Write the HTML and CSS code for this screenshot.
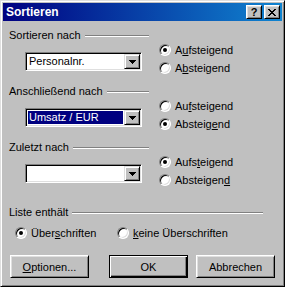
FILE: index.html
```html
<!DOCTYPE html>
<html lang="de">
<head>
    <meta charset="UTF-8">
    <title>Sortieren</title>
    <link rel="stylesheet" href="styles.css">
</head>
<body>
    <div class="window">
        <div class="titlebar">
            <span class="title">Sortieren</span>
            <div class="caption-buttons">
                <span class="cap-btn help">?</span>
                <span class="cap-btn">
                    <svg width="8" height="7" viewBox="0 0 8 7" shape-rendering="crispEdges"><path d="M0 0h2v1h-2z M6 0h2v1h-2z M1 1h2v1h-2z M5 1h2v1h-2z M2 2h4v1h-4z M3 3h2v1h-2z M2 4h4v1h-4z M1 5h2v1h-2z M5 5h2v1h-2z M0 6h2v1h-2z M6 6h2v1h-2z" fill="#000"/></svg>
                </span>
            </div>
        </div>
        <div class="content">
            <div class="sort-group">
                <div class="sort-left">
                    <div class="legend"><span>Sortieren nach</span><span class="rule"></span></div>
                    <div class="combo">
                        <span class="combo-value">Personalnr.</span>
                        <span class="combo-btn"><svg width="7" height="4" viewBox="0 0 7 4" shape-rendering="crispEdges"><path d="M0 0h7v1h-7z M1 1h5v1h-5z M2 2h3v1h-3z M3 3h1v1h-1z" fill="#000"/></svg></span>
                    </div>
                </div>
                <div class="sort-right">
                    <div class="option"><span class="radio checked"></span><span>A<u>u</u>fsteigend</span></div>
                    <div class="option"><span class="radio"></span><span>A<u>b</u>steigend</span></div>
                </div>
            </div>
            <div class="sort-group">
                <div class="sort-left">
                    <div class="legend"><span>Anschließend nach</span><span class="rule"></span></div>
                    <div class="combo">
                        <span class="combo-value selected">Umsatz / EUR</span>
                        <span class="combo-btn"><svg width="7" height="4" viewBox="0 0 7 4" shape-rendering="crispEdges"><path d="M0 0h7v1h-7z M1 1h5v1h-5z M2 2h3v1h-3z M3 3h1v1h-1z" fill="#000"/></svg></span>
                    </div>
                </div>
                <div class="sort-right">
                    <div class="option"><span class="radio"></span><span>Au<u>f</u>steigend</span></div>
                    <div class="option"><span class="radio checked"></span><span>Absteig<u>e</u>nd</span></div>
                </div>
            </div>
            <div class="sort-group">
                <div class="sort-left">
                    <div class="legend"><span>Zuletzt nach</span><span class="rule"></span></div>
                    <div class="combo">
                        <span class="combo-value"></span>
                        <span class="combo-btn"><svg width="7" height="4" viewBox="0 0 7 4" shape-rendering="crispEdges"><path d="M0 0h7v1h-7z M1 1h5v1h-5z M2 2h3v1h-3z M3 3h1v1h-1z" fill="#000"/></svg></span>
                    </div>
                </div>
                <div class="sort-right">
                    <div class="option"><span class="radio checked"></span><span>Aufs<u>t</u>eigend</span></div>
                    <div class="option"><span class="radio"></span><span>Absteigen<u>d</u></span></div>
                </div>
            </div>

            <div class="legend wide"><span>Liste enthält</span><span class="rule"></span></div>
            <div class="header-options">
                <div class="option first"><span class="radio checked"></span><span>Über<u>s</u>chriften</span></div>
                <div class="option"><span class="radio"></span><span><u>k</u>eine Überschriften</span></div>
            </div>

            <div class="buttons">
                <span class="btn"><u>O</u>ptionen...</span>
                <span class="btn default">OK</span>
                <span class="btn cancel">Abbrechen</span>
            </div>
        </div>
    </div>
</body>
</html>
```

FILE: styles.css
```css
/* Windows classic dialog */
body {
    margin: 0;
    padding: 0;
    font-family: "Liberation Sans", Arial, sans-serif;
    font-size: 11px;
    color: #000000;
    background-color: #c0c0c0;
}
.window {
    width: 285px;
    height: 287px;
    box-sizing: border-box;
    padding: 2px;
    background-color: #c0c0c0;
    border: 1px solid;
    border-color: #dfdfdf #000000 #000000 #dfdfdf;
    box-shadow: inset 1px 1px #ffffff, inset -1px -1px #808080;
}
.titlebar {
    height: 18px;
    display: flex;
    align-items: center;
    justify-content: space-between;
    background: linear-gradient(to right, #000080, #1084d0);
}
.title {
    color: #ffffff;
    font-weight: bold;
    font-size: 12px;
    padding-left: 3px;
}
.caption-buttons {
    display: flex;
    gap: 2px;
    margin-right: 2px;
}
.cap-btn {
    width: 16px;
    height: 14px;
    box-sizing: border-box;
    display: flex;
    align-items: center;
    justify-content: center;
    background-color: #c0c0c0;
    border: 1px solid;
    border-color: #ffffff #000000 #000000 #ffffff;
    box-shadow: inset 1px 1px #dfdfdf, inset -1px -1px #808080;
}
.cap-btn.help {
    font-weight: bold;
    font-size: 11px;
    line-height: 12px;
}
.content {
    padding: 8px 0 0 6px;
}
.sort-group {
    display: flex;
    height: 56px;
}
.sort-left {
    width: 140px;
}
.legend {
    display: flex;
    align-items: center;
    height: 13px;
    line-height: 13px;
    white-space: nowrap;
}
.legend.wide {
    width: 254px;
    margin-top: 9px;
}
.rule {
    flex: 1;
    height: 0;
    margin-left: 4px;
    border-top: 1px solid #808080;
    border-bottom: 1px solid #ffffff;
}
.combo {
    width: 117px;
    height: 19px;
    margin: 10px 0 0 16px;
    box-sizing: border-box;
    padding: 1px;
    display: flex;
    background-color: #ffffff;
    border: 1px solid;
    border-color: #808080 #ffffff #ffffff #808080;
    box-shadow: inset 1px 1px #000000, inset -1px -1px #dfdfdf;
}
.combo-value {
    flex: 1;
    margin: 1px;
    padding-left: 1px;
    line-height: 13px;
}
.combo-value.selected {
    background-color: #000080;
    color: #ffffff;
}
.combo-btn {
    width: 16px;
    height: 15px;
    box-sizing: border-box;
    display: flex;
    align-items: center;
    justify-content: center;
    background-color: #c0c0c0;
    border: 1px solid;
    border-color: #dfdfdf #000000 #000000 #dfdfdf;
    box-shadow: inset 1px 1px #ffffff, inset -1px -1px #808080;
}
.sort-right {
    margin-left: 10px;
    padding-top: 12px;
}
.option {
    display: flex;
    align-items: center;
    gap: 4px;
    height: 18px;
    white-space: nowrap;
}
.radio {
    position: relative;
    flex-shrink: 0;
    width: 12px;
    height: 12px;
    box-sizing: border-box;
    border-radius: 50%;
    background-color: #ffffff;
    border: 1px solid;
    border-color: #808080 #ffffff #ffffff #808080;
    box-shadow: inset 1px 1px #000000, inset -1px -1px #dfdfdf;
}
.radio.checked::after {
    content: "";
    position: absolute;
    left: 3px;
    top: 3px;
    width: 4px;
    height: 4px;
    border-radius: 50%;
    background-color: #000000;
}
.header-options {
    display: flex;
    margin-top: 5px;
    padding-left: 6px;
}
.header-options .option.first {
    width: 102px;
}
.buttons {
    display: flex;
    margin-top: 13px;
    padding-left: 1px;
}
.btn {
    width: 79px;
    height: 23px;
    box-sizing: border-box;
    display: flex;
    align-items: center;
    justify-content: center;
    background-color: #c0c0c0;
    border: 1px solid;
    border-color: #ffffff #000000 #000000 #ffffff;
    box-shadow: inset 1px 1px #dfdfdf, inset -1px -1px #808080;
}
.btn.default {
    margin-left: 20px;
    border-color: #000000;
    box-shadow: inset 1px 1px #ffffff, inset -1px -1px #000000, inset -2px -2px #808080;
}
.btn.cancel {
    margin-left: 8px;
}
```
